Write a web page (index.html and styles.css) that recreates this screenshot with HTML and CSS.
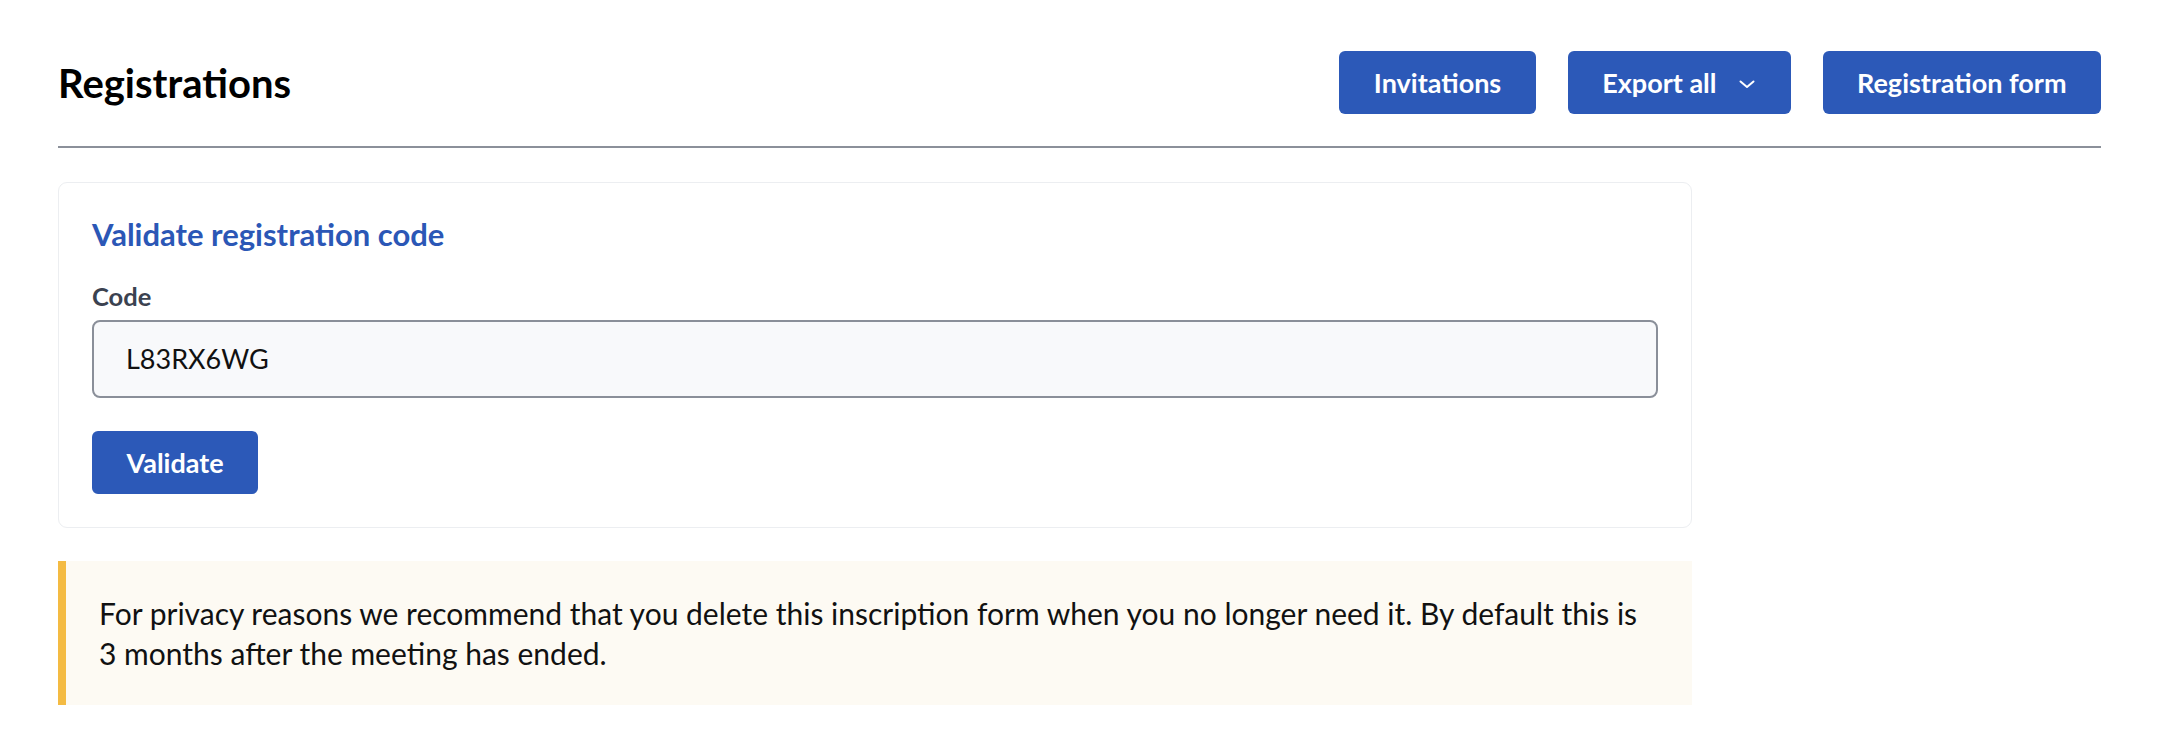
FILE: index.html
```html
<!DOCTYPE html>
<html lang="en">
<head>
  <meta charset="UTF-8" />
  <meta name="viewport" content="width=device-width, initial-scale=1.0"/>
  <title>Registrations</title>
  <link rel="stylesheet" href="styles.css">
</head>
<body>
  <div class="page">
    <header class="page-header">
      <h1>Registrations</h1>
      <div class="actions">
        <button class="btn">Invitations</button>
        <button class="btn btn-dropdown">
          Export all
          <svg class="chevron" width="20" height="20" viewBox="0 0 20 20" aria-hidden="true">
            <path d="M3.5 7.5l6.5 5.5 6.5-5.5" fill="none" stroke="currentColor" stroke-width="2" stroke-linecap="round" stroke-linejoin="round"/>
          </svg>
        </button>
        <button class="btn">Registration form</button>
      </div>
    </header>

    <section class="card">
      <h2 class="card-title">Validate registration code</h2>
      <label class="field-label" for="code">Code</label>
      <input class="field-input" type="text" id="code" value="L83RX6WG" />
      <button class="btn btn-validate">Validate</button>
    </section>

    <div class="notice">
      For privacy reasons we recommend that you delete this inscription form when you no longer need it. By default this is 3 months after the meeting has ended.
    </div>
  </div>
</body>
</html>
```

FILE: styles.css
```css
body {
  margin: 0;
  background: #fff;
  color: #111;
  font-family: "Lato", "Open Sans", sans-serif;
}

.page {
  padding: 0 65px 40px 58px;
}

.page-header {
  display: flex;
  align-items: center;
  justify-content: space-between;
  padding: 51px 0 32px;
  border-bottom: 2px solid #8b909a;
}

h1 {
  margin: 0;
  font-size: 40px;
  font-weight: 700;
  line-height: 1.2;
  color: #000;
}

.actions {
  display: flex;
  gap: 32px;
}

.btn {
  display: inline-flex;
  align-items: center;
  height: 63px;
  padding: 0 34.5px;
  font-family: inherit;
  font-size: 27px;
  font-weight: 700;
  color: #fff;
  background-color: #2c59b8;
  border: none;
  border-radius: 6px;
  cursor: pointer;
}

.btn-dropdown {
  gap: 20px;
  padding-right: 34px;
}

.chevron {
  width: 20px;
  height: 20px;
  margin-top: 2px;
}

.card {
  width: 80%;
  box-sizing: border-box;
  margin-top: 34px;
  padding: 33px;
  border: 1.5px solid #eceef1;
  border-radius: 9px;
  display: flex;
  flex-direction: column;
  align-items: flex-start;
}

.card-title {
  margin: 0 0 28px;
  font-size: 31px;
  font-weight: 700;
  line-height: 1.2;
  color: #2b57b6;
}

.field-label {
  font-size: 25.5px;
  font-weight: 700;
  line-height: 1.2;
  color: #3b4250;
  margin-bottom: 8px;
}

.field-input {
  box-sizing: border-box;
  width: 100%;
  height: 78px;
  padding: 0 32px;
  font-family: inherit;
  font-size: 27px;
  color: #111;
  background: #f8f9fb;
  border: 2px solid #8a8f99;
  border-radius: 8px;
}

.btn-validate {
  margin-top: 33px;
}

.notice {
  width: 80%;
  box-sizing: border-box;
  margin-top: 33px;
  padding: 32px 40px 32px 33px;
  font-size: 30px;
  line-height: 40px;
  color: #111;
  background: #fdfaf3;
  border-left: 8px solid #f4bb43;
}
```
